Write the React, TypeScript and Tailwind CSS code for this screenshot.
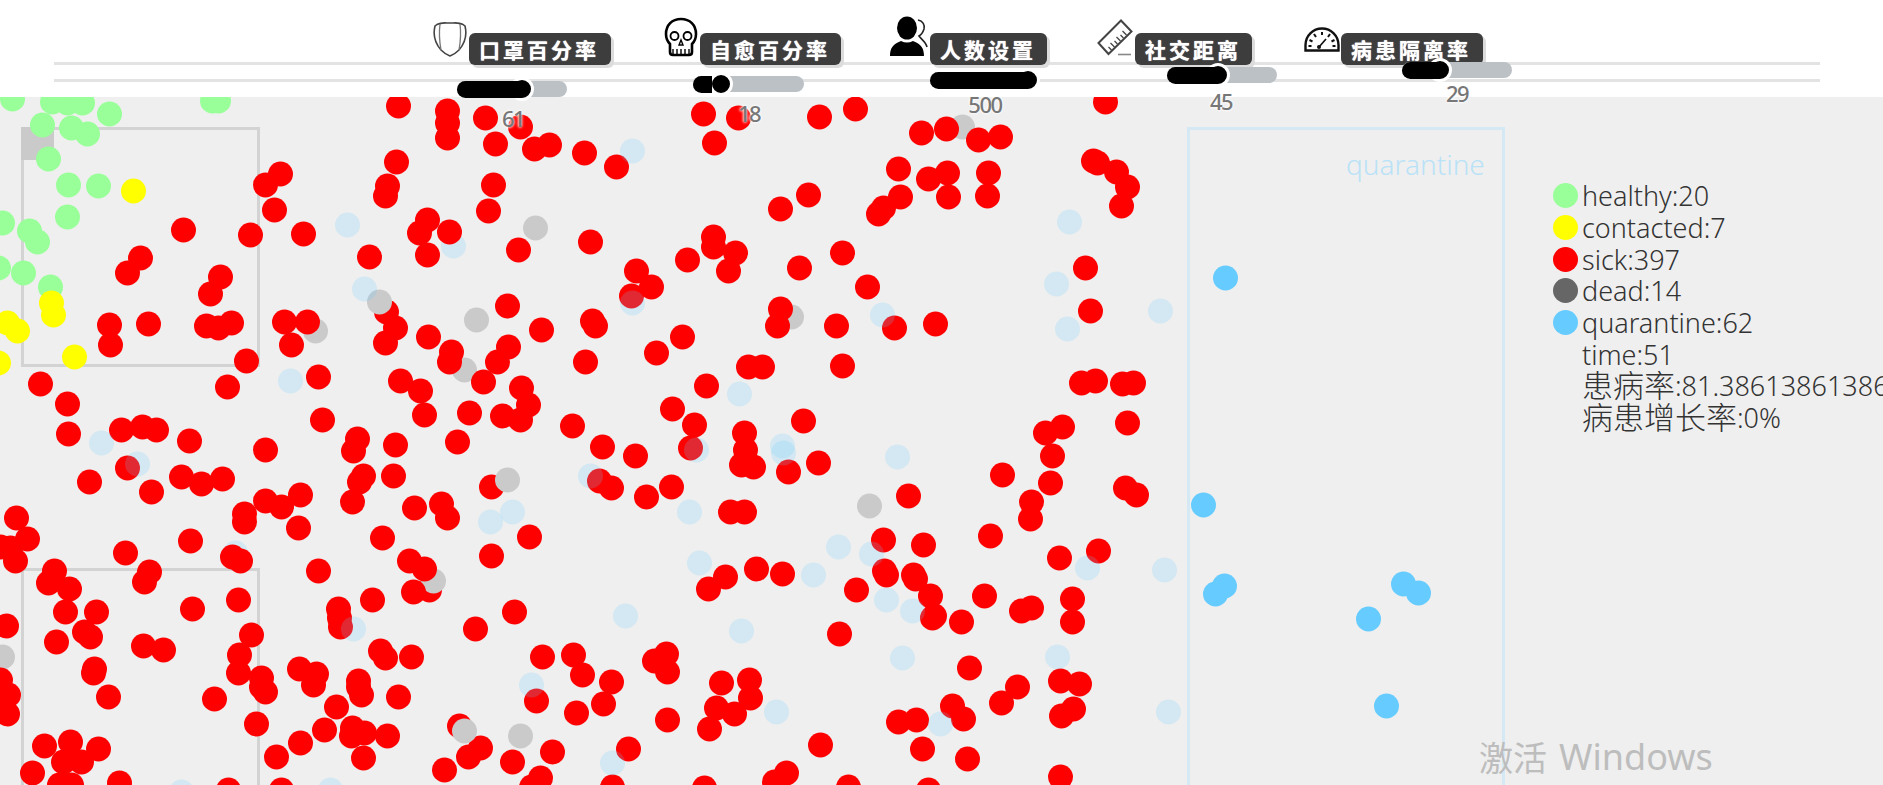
import React from 'react'

type Pt = [number, number]

const green: Pt[] = [
  [12, 99], [52, 102], [67, 103], [82, 103], [109, 114], [42, 125], [71, 128], [87, 134], [48, 159], [68, 185], [98, 186],
  [67, 217], [2, 223], [29, 231], [37, 242], [-2, 268], [23, 273], [50, 287], [212, 101], [218, 101],
]

const yellow: Pt[] = [[133, 191], [51, 303], [53, 315], [7, 323], [17, 331], [74, 357], [-2, 363]]

const ghostUnder: Pt[] = [[235, 553], [453, 246]]

const redUnder: Pt[] = [[429, 590], [386, 312], [459, 726]]

const grayUnder: Pt[] = [[315, 331], [464, 370], [962, 127], [791, 317], [433, 581], [2, 657]]

const red: Pt[] = [
  [280, 174], [265, 185], [274, 210], [183, 230], [250, 235], [303, 234], [140, 258], [127, 273], [220, 277], [210, 294],
  [109, 325], [110, 345], [148, 324], [206, 326], [218, 328], [231, 323], [284, 322], [307, 322], [291, 345], [246, 361],
  [398, 106], [447, 111], [447, 123], [447, 138], [485, 118], [520, 127], [495, 144], [534, 149], [549, 145], [584, 153],
  [616, 167], [396, 162], [387, 186], [385, 196], [493, 185], [488, 211], [427, 220], [419, 233], [449, 232], [427, 255],
  [369, 257], [518, 250], [590, 242], [636, 271], [631, 296], [507, 306], [541, 330], [592, 321], [595, 326],
  [395, 328], [385, 343], [428, 337], [451, 352], [449, 362], [508, 347], [497, 362], [483, 382], [521, 388], [528, 405],
  [585, 362], [572, 426], [400, 381], [420, 391], [424, 415], [469, 413], [502, 416], [520, 420], [40, 384], [67, 404],
  [227, 387], [318, 377], [322, 420], [68, 434], [121, 430], [142, 427], [156, 430], [189, 441], [265, 450], [127, 468],
  [89, 482], [151, 492], [181, 477], [201, 484], [222, 479], [357, 439], [353, 451], [395, 445], [393, 476], [363, 476],
  [359, 482], [352, 502], [457, 442], [602, 447], [635, 456], [491, 487], [599, 481], [611, 488], [265, 501],
  [281, 507], [300, 495], [244, 514], [244, 522], [298, 528], [414, 508], [441, 504], [447, 518], [529, 537], [491, 556],
  [16, 518], [27, 539], [10, 548], [15, 561], [0, 547], [190, 541], [125, 553], [382, 538], [232, 557], [240, 561],
  [318, 571], [409, 561], [424, 569], [54, 571], [48, 583], [69, 589], [149, 572], [144, 582], [238, 600], [192, 609],
  [372, 600], [413, 592], [65, 612], [96, 612], [514, 612], [475, 629], [6, 626], [84, 632], [90, 637],
  [56, 642], [143, 646], [163, 650], [338, 609], [339, 618], [340, 627], [251, 635], [239, 655], [238, 673], [261, 678],
  [261, 687], [265, 692], [94, 669], [93, 673], [108, 697], [214, 699], [299, 669], [316, 674], [313, 685], [380, 651],
  [385, 658], [411, 657], [358, 681], [358, 687], [361, 695], [398, 697], [336, 707], [542, 657], [573, 655], [582, 675],
  [611, 682], [536, 701], [603, 704], [576, 713], [256, 724], [324, 730], [352, 728], [351, 736], [364, 733], [387, 736],
  [300, 743], [276, 757], [363, 758], [480, 748], [468, 757], [444, 770], [512, 762], [552, 752], [628, 749],
  [540, 778], [531, 787], [612, 787], [44, 746], [70, 742], [98, 749], [63, 762], [81, 762], [32, 773], [59, 785],
  [71, 785], [119, 783], [228, 790], [281, 790], [0, 680], [8, 695], [7, 714],
  [703, 114], [738, 118], [714, 143], [819, 117], [855, 109], [921, 133], [946, 129], [978, 140], [1000, 137], [898, 169],
  [928, 179], [947, 173], [988, 173], [948, 197], [987, 196], [900, 197], [883, 208], [878, 214], [1105, 102], [1093, 161],
  [1097, 163], [1116, 172], [1127, 187], [1121, 206], [780, 209], [808, 195], [713, 237], [713, 247], [735, 253], [728, 271],
  [687, 260], [799, 268], [842, 253], [867, 287], [1085, 268], [1090, 311], [780, 309], [777, 326], [836, 326], [894, 328],
  [935, 324], [682, 337], [656, 353], [748, 367], [762, 367], [842, 366], [706, 386], [672, 409], [694, 425], [744, 433],
  [803, 421], [1081, 383], [1095, 381], [1122, 384], [1133, 383], [1127, 423], [1062, 427], [1045, 433], [651, 287],
  [690, 448], [745, 450], [741, 465], [753, 467], [788, 472], [818, 463], [646, 497], [671, 487],
  [730, 512], [744, 512], [908, 496], [1002, 475], [1052, 456], [1050, 483], [1031, 502], [1030, 519], [990, 536], [1125, 488],
  [1136, 495], [883, 540], [923, 545], [1059, 558], [1098, 551], [725, 577], [708, 589], [756, 569], [782, 574], [856, 590],
  [884, 571], [886, 575], [913, 575], [915, 579], [930, 596], [984, 596], [1072, 599], [1031, 608], [1021, 611], [934, 616],
  [932, 618], [961, 622], [1072, 622], [839, 634], [666, 654], [654, 661], [667, 672], [721, 683], [749, 680], [750, 698],
  [716, 708], [734, 714], [709, 729], [667, 720], [969, 668], [1017, 687], [1001, 703], [1060, 681], [1079, 684], [1073, 709],
  [1061, 716], [952, 706], [963, 719], [898, 722], [916, 720], [922, 749], [967, 759], [820, 745], [786, 773], [774, 782],
  [1060, 777], [704, 788], [848, 787], [928, 790],
]

const grayOver: Pt[] = [[379, 302], [476, 320], [535, 228], [507, 480], [464, 731], [520, 736], [869, 506]]

const ghost: Pt[] = [
  [347, 225], [364, 289], [290, 381], [632, 151], [632, 303], [101, 443], [137, 464], [590, 476], [490, 522],
  [512, 512], [625, 616], [353, 629], [531, 685], [612, 763], [330, 790], [181, 792], [1069, 222], [1056, 284],
  [1160, 311], [1067, 329], [882, 315], [739, 394], [696, 450], [782, 446], [783, 453], [897, 457], [689, 512], [838, 547],
  [871, 554], [699, 563], [813, 575], [886, 600], [912, 611], [1087, 568], [1164, 570], [741, 631], [902, 658], [1057, 657],
  [776, 712], [940, 724], [1168, 712],
]

const quarantine: Pt[] = [[1225, 278], [1203, 505], [1215, 594], [1224, 586], [1403, 584], [1418, 593], [1368, 619], [1386, 706]]

const Dots = ({ pts, fill, opacity }: { pts: Pt[]; fill: string; opacity?: number }) => (
  <>
    {pts.map(([x, y], i) => (
      <circle key={i} cx={x + 0.5} cy={y - 97} r={12.5} fill={fill} fillOpacity={opacity} />
    ))}
  </>
)

const MaskIcon = () => (
  <svg width="36" height="38" viewBox="0 0 36 38" fill="none" stroke="#444" strokeWidth="1.6">
    <path d="M3 6C7 2 12 3 18 3s11-1 15 3c2 8 0 17-6 24-3 3-6 5-9 6-3-1-6-3-9-6C3 23 1 14 3 6Z" />
    <path d="M8 4c-1 8-1 15 1 26M28 4c1 8 1 15-1 26" strokeWidth="1.3" stroke="#777" />
  </svg>
)

const SkullIcon = () => (
  <svg width="34" height="40" viewBox="0 0 34 40" fill="none" stroke="#000" strokeWidth="2.6">
    <path d="M17 2C8 2 2 8 2 17c0 5 2 8 4 10v8c0 2 1 3 3 3h16c2 0 3-1 3-3v-8c2-2 4-5 4-10 0-9-6-15-15-15Z" />
    <circle cx="10.5" cy="19" r="4" strokeWidth="1.8" />
    <circle cx="23.5" cy="19" r="4" strokeWidth="1.8" />
    <path d="M17 23l-2 5h4l-2-5Z" strokeWidth="1.4" />
    <path d="M9 37v-5M13 37v-5M17 37v-5M21 37v-5M25 37v-5" strokeWidth="1.4" />
  </svg>
)

const UsersIcon = () => (
  <svg width="42" height="42" viewBox="0 0 42 42">
    <ellipse cx="17" cy="12" rx="10" ry="11.5" fill="#000" />
    <path d="M0 40c0-8 3-12 11-15 4 2 8 2 12 0 8 3 11 7 11 15H0Z" fill="#000" />
    <path d="M28 4c5 1 7 5 6 9-1 3-3 6-5 7 2 3 7 6 8 11" fill="none" stroke="#222" strokeWidth="1.6" />
  </svg>
)

const RulerIcon = () => (
  <svg width="40" height="40" viewBox="0 0 40 40" fill="none" stroke="#444">
    <path d="M1.5 24 24 1.5 34.5 12.5 11.5 35Z" strokeWidth="2" />
    <path d="M29.5 16l-4-4M26.5 19l-3-3M23.500 22l-4-4M20.500 25l-3-3M17.500 28l-4-4M14.500 31l-3-3" strokeWidth="1.3" />
    <path d="M21 35.500h13" stroke="#888" strokeWidth="1.6" />
  </svg>
)

const GaugeIcon = () => (
  <svg width="36" height="26" viewBox="0 0 36 26" fill="none" stroke="#111">
    <path d="M1.5 24.5V19a16.5 16.5 0 0 1 33 0v5.5Z" strokeWidth="2.4" />
    <path d="M18 6v3M10 8l2 3M26 8l-2 3M5.5 14l3 1.5M30.5 14l-3 1.5M4.5 20h3M31.5 20h-3" strokeWidth="2" />
    <path d="M15 21l7-8" strokeWidth="1.6" />
    <circle cx="15" cy="21" r="2" fill="#111" stroke="none" />
  </svg>
)

interface ControlProps {
  icon: React.ReactNode
  label: string
  value: string
  iconClass: string
  tagClass: string
  sliderClass: string
  thumb: number
  fill: number
  valueClass: string
  widthClass: string
}

const Control = ({ icon, label, value, iconClass, tagClass, sliderClass, thumb, fill, valueClass, widthClass }: ControlProps) => (
  <div className={`shrink-0 ${widthClass}`}>
    <div className="flex items-start h-[65px]">
      <div className={iconClass}>{icon}</div>
      <div
        className={`mt-[33px] h-[32px] flex items-center rounded-[6px] bg-[#3d3d3d] pl-[10px] text-[21px] leading-none font-bold tracking-[3px] text-white [text-shadow:0_0_1px_#fff] shadow-[3px_3px_0_#dcdcdc] whitespace-nowrap [font-family:'Noto_Sans_CJK_SC',sans-serif] ${tagClass}`}
      >
        {label}
      </div>
    </div>
    <div className={`relative h-[16px] rounded-full bg-[#bcc1c5] ${sliderClass}`}>
      <div
        className="absolute top-[-4px] w-[24px] h-[24px] rounded-full bg-black border-[3px] border-white"
        style={{ left: thumb - 12 }}
      />
      <div className="relative h-[17px] rounded-l-full bg-black" style={{ width: fill }} />
    </div>
    <div
      className={`w-[60px] text-center text-[22px] leading-[24px] font-medium tracking-[-1.5px] text-[#777] [text-shadow:0_0_3px_#fff,0_0_3px_#fff] [font-family:'Noto_Sans',sans-serif] ${valueClass}`}
    >
      {value}
    </div>
  </div>
)

const legend = [
  { color: 'bg-[#99ff99]', text: 'healthy:20' },
  { color: 'bg-[#ffff00]', text: 'contacted:7' },
  { color: 'bg-[#ff0000]', text: 'sick:397' },
  { color: 'bg-[#666666]', text: 'dead:14' },
  { color: 'bg-[#66ccff]', text: 'quarantine:62' },
  { color: '', text: 'time:51' },
]

export default function App() {
  return (
    <div className="relative w-[1883px] h-[785px] overflow-hidden bg-white">
      <header className="relative z-10 h-[97px] pl-[432px] flex">
        <div className="absolute left-[54px] w-[1766px] top-[62px] h-[3px] bg-[#e3e3e3]" />
        <div className="absolute left-[54px] w-[1766px] top-[79px] h-[3px] bg-[#e3e3e3]" />
        <Control
          icon={<MaskIcon />}
          label="口罩百分率"
          value="61"
          widthClass="relative w-[232px]"
          iconClass="mt-[20px] w-[37px]"
          tagClass="w-[142px]"
          sliderClass="ml-[25px] w-[110px] mt-[16px]"
          thumb={65}
          fill={65}
          valueClass="ml-[51px] mt-[9px]"
        />
        <Control
          icon={<SkullIcon />}
          label="自愈百分率"
          value="18"
          widthClass="relative w-[226px]"
          iconClass="mt-[17px] w-[36px]"
          tagClass="w-[141px]"
          sliderClass="ml-[29px] w-[111px] mt-[11px]"
          thumb={28}
          fill={19}
          valueClass="ml-[55px] mt-[9px]"
        />
        <Control
          icon={<UsersIcon />}
          label="人数设置"
          value="500"
          widthClass="relative w-[207px]"
          iconClass="mt-[16px] w-[40px]"
          tagClass="w-[117px]"
          sliderClass="ml-[40px] w-[107px] mt-[7px]"
          thumb={98}
          fill={98}
          valueClass="ml-[65px] mt-[4px]"
        />
        <Control
          icon={<RulerIcon />}
          label="社交距离"
          value="45"
          widthClass="relative w-[207px]"
          iconClass="mt-[19px] w-[38px]"
          tagClass="w-[117px]"
          sliderClass="ml-[70px] w-[110px] mt-[2px]"
          thumb={51}
          fill={51}
          valueClass="ml-[94px] mt-[6px]"
        />
        <Control
          icon={<GaugeIcon />}
          label="病患隔离率"
          value="29"
          widthClass="relative w-[190px]"
          iconClass="mt-[26px] w-[37px]"
          tagClass="w-[142px]"
          sliderClass="ml-[98px] w-[110px] mt-[-3px]"
          thumb={38}
          fill={38}
          valueClass="ml-[123px] mt-[3px]"
        />
      </header>

      <main className="relative h-[688px] bg-[#efefef] overflow-hidden">
        <svg className="absolute inset-0" width="1883" height="688" viewBox="0 0 1883 688">
          <g fill="none" strokeWidth="3">
            <rect x="22.5" y="31.5" width="236" height="237" stroke="#d3d3d3" />
            <rect x="22.5" y="472.5" width="236" height="237" stroke="#d3d3d3" />
            <rect x="1188.5" y="31.5" width="315" height="700" stroke="#d5e9f5" />
          </g>
          <rect x="21" y="30" width="33" height="33" fill="#cacaca" />
          <Dots pts={green} fill="#99ff99" />
          <Dots pts={yellow} fill="#ffff00" />
          <Dots pts={ghostUnder} fill="#66ccff" opacity={0.2} />
          <Dots pts={redUnder} fill="#ff0000" />
          <Dots pts={grayUnder} fill="#cacaca" />
          <Dots pts={red} fill="#ff0000" />
          <Dots pts={grayOver} fill="#cacaca" />
          <Dots pts={ghost} fill="#66ccff" opacity={0.2} />
          <Dots pts={quarantine} fill="#66ccff" />
        </svg>

        <span className="absolute left-[1346px] top-[48px] text-[28px] leading-[38px] font-light text-[#b9e2f7] [font-family:'Noto_Sans',sans-serif]">
          quarantine
        </span>

        <div className="relative ml-[1553px] w-[330px] pt-[83px] flex flex-col text-[#333] font-light whitespace-nowrap [font-family:'Noto_Sans','Noto_Sans_CJK_SC',sans-serif]">
          {legend.map(row => (
            <div key={row.text} className="flex items-center h-[31.7px] gap-[4px]">
              <span className={`w-[25px] h-[25px] rounded-full ${row.color}`} />
              <span className="text-[27px] leading-none">{row.text}</span>
            </div>
          ))}
          <div className="flex items-center h-[31.7px] pl-[29px]">
            <span className="text-[31px] leading-none">患病率</span>
            <span className="text-[27px] leading-none">:81.38613861386138</span>
          </div>
          <div className="flex items-center h-[31.7px] pl-[29px]">
            <span className="text-[31px] leading-none">病患增长率</span>
            <span className="text-[27px] leading-none">:0%</span>
          </div>
        </div>

        <span className="absolute left-[1479px] top-[638px] flex items-center gap-[12px] text-[#bdbdbd] whitespace-nowrap">
          <span className="text-[34px] leading-[44px] [font-family:'Noto_Sans_CJK_SC',sans-serif]">激活</span>
          <span className="text-[36px] leading-[44px] [font-family:'Noto_Sans',sans-serif]">Windows</span>
        </span>
      </main>
    </div>
  )
}
